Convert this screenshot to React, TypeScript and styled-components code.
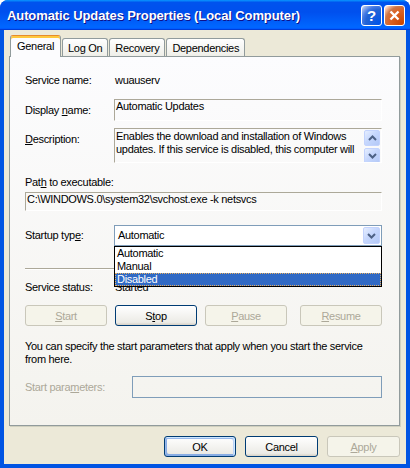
import styled, { createGlobalStyle } from 'styled-components';

const GlobalStyle = createGlobalStyle`
  html, body {
    margin: 0;
    padding: 0;
    background: #ffffff;
  }
  body {
    font-family: "Liberation Sans", Arial, sans-serif;
    font-size: 11px;
    letter-spacing: -0.3px;
    color: #000000;
  }
  * {
    box-sizing: border-box;
  }
`;

const Window = styled.div`
  width: 410px;
  height: 468px;
  display: flex;
  flex-direction: column;
  background: #0054e3;
  border-radius: 8px 8px 0 0;
  overflow: hidden;
`;

const TitleBar = styled.div`
  height: 30px;
  flex: none;
  display: flex;
  align-items: center;
  justify-content: space-between;
  padding: 0 5px 0 7px;
  background: linear-gradient(
    180deg,
    #0997ff,
    #0053ee 8%,
    #0050ee 40%,
    #0066ff 88%,
    #0066ff 93%,
    #005bff 95%,
    #003dd7 96%,
    #003dd7
  );
`;

const Title = styled.div`
  color: #ffffff;
  font-weight: 700;
  font-size: 13px;
  letter-spacing: -0.1px;
  text-shadow: 1px 1px #0f1089;
`;

const TitleButtons = styled.div`
  display: flex;
  gap: 2px;
`;

const CaptionButton = styled.div<{ $kind: 'help' | 'close' }>`
  width: 21px;
  height: 21px;
  border: 1px solid #ffffff;
  border-radius: 3px;
  display: flex;
  align-items: center;
  justify-content: center;
  color: #ffffff;
  font-weight: 700;
  font-size: 15px;
  background: ${(p) =>
    p.$kind === 'close'
      ? 'radial-gradient(circle at 90% 90%, #cc4600 0, #dc6527 55%, #cd7546 70%, #ffccb2 90%, #fff 100%)'
      : 'radial-gradient(circle at 90% 90%, #0054e9 0, #2263d5 55%, #4479e4 70%, #a3bbec 90%, #fff 100%)'};
`;

const Body = styled.div`
  flex: 1;
  min-height: 0;
  margin: 0 4px 4px;
  background: #ece9d8;
  display: flex;
  flex-direction: column;
  padding: 5px 6px 0 5px;
`;

const TabRow = styled.div`
  display: flex;
  align-items: flex-end;
  height: 21px;
  padding-left: 1px;
  gap: 1px;
  flex: none;
`;

const Tab = styled.div<{ $active?: boolean }>`
  position: relative;
  display: flex;
  align-items: center;
  border: 1px solid #919b9c;
  border-bottom: none;
  border-radius: 3px 3px 0 0;
  ${(p) =>
    p.$active
      ? `
    z-index: 1;
    height: 22px;
    margin-bottom: -1px;
    padding: 0 6px 2px;
    background: #fcfcfe;
    border-top-color: #e68b2c;
    box-shadow: inset 0 2px #ffc83c;
  `
      : `
    height: 18px;
    padding: 0 5px;
    background: linear-gradient(180deg, #fff, #fafaf9 26%, #f0f0ea 95%, #ecebe6);
  `}
`;

const Panel = styled.div`
  flex: 1;
  display: flex;
  flex-direction: column;
  border: 1px solid #919b9c;
  background: linear-gradient(180deg, #fcfcfe, #f4f3ee);
  box-shadow: 1px 1px 0 #d0d0bf;
  padding: 0 17px 0 15px;
`;

const FieldRow = styled.div<{ $top: number; $label?: number; $center?: boolean }>`
  display: grid;
  grid-template-columns: ${(p) => p.$label ?? 89}px 1fr;
  align-items: ${(p) => (p.$center ? 'center' : 'start')};
  margin-top: ${(p) => p.$top}px;
  line-height: 13px;
`;

const Label = styled.div<{ $pad?: number; $disabled?: boolean }>`
  padding-top: ${(p) => p.$pad ?? 0}px;
  line-height: 13px;
  color: ${(p) => (p.$disabled ? '#aca899' : '#000000')};
  white-space: nowrap;
`;

const Value = styled.div`
  padding-left: 1px;
  line-height: 13px;
`;

const ReadOnlyBox = styled.div<{ $height: number; $padTop?: number }>`
  position: relative;
  height: ${(p) => p.$height}px;
  border: 1px solid;
  border-color: #aca899 #ffffff #ffffff #aca899;
  padding: ${(p) => p.$padTop ?? 0}px 18px 0 1px;
  line-height: 13px;
  white-space: pre-wrap;
  overflow: hidden;
`;

const Heading = styled.div<{ $top: number }>`
  margin-top: ${(p) => p.$top}px;
  line-height: 13px;
`;

const ScrollColumn = styled.div`
  position: absolute;
  top: 1px;
  right: 1px;
  display: flex;
  flex-direction: column;
  gap: 2px;
`;

const ArrowButton = styled.div<{ $size: number }>`
  width: ${(p) => p.$size}px;
  height: ${(p) => p.$size}px;
  display: flex;
  align-items: center;
  justify-content: center;
  border: 1px solid #c3d3fd;
  border-radius: 2px;
  background: linear-gradient(135deg, #e6eeff 0%, #c6d7fd 45%, #b4c9f7 100%);
`;

const ComboWrap = styled.div`
  position: relative;
`;

const Combo = styled.div`
  height: 21px;
  border: 1px solid #7f9db9;
  background: #ffffff;
  display: flex;
  align-items: center;
  justify-content: space-between;
  padding: 0 1px 0 3px;
`;

const DropList = styled.div`
  position: absolute;
  z-index: 2;
  top: 100%;
  left: 0;
  right: 0;
  border: 1px solid #000000;
  background: #ffffff;
`;

const DropItem = styled.div<{ $selected?: boolean }>`
  height: 13px;
  line-height: 13px;
  padding-left: 2px;
  ${(p) =>
    p.$selected
      ? `
    background: #316ac5;
    color: #ffffff;
    outline: 1px dotted #e8b060;
    outline-offset: -1px;
  `
      : ''}
`;

const Separator = styled.div<{ $top: number }>`
  margin-top: ${(p) => p.$top}px;
  height: 2px;
  border-top: 1px solid #aca899;
  border-bottom: 1px solid #ffffff;
`;

const ButtonRow = styled.div<{ $top: number }>`
  margin-top: ${(p) => p.$top}px;
  display: flex;
  gap: 8px;
  & > :last-child {
    margin-left: auto;
  }
`;

const Button = styled.div<{ $width: number; $disabled?: boolean; $default?: boolean }>`
  width: ${(p) => p.$width}px;
  height: 21px;
  display: flex;
  align-items: center;
  justify-content: center;
  border-radius: 3px;
  border: 1px solid ${(p) => (p.$disabled ? '#c9c7ba' : '#003c74')};
  color: ${(p) => (p.$disabled ? '#aca899' : '#000000')};
  background: ${(p) =>
    p.$disabled ? '#f5f4ea' : 'linear-gradient(180deg, #fff, #ecebe6 86%, #d6d0c5)'};
  box-shadow: ${(p) =>
    p.$default
      ? 'inset -1px 1px #cee7ff, inset 1px 2px #98b8ea, inset -2px 2px #bcd4f6, inset 1px -1px #89ade4, inset 2px -2px #89ade4'
      : 'none'};
`;

const Note = styled.p<{ $top: number }>`
  margin: ${(p) => p.$top}px 0 0;
  line-height: 13px;
`;

const ParamBox = styled.div`
  height: 22px;
  border: 1px solid #7f9db9;
`;

const Footer = styled.div`
  flex: none;
  display: flex;
  justify-content: flex-end;
  gap: 9px;
  padding: 10px 0 7px;
`;

const Chevron = ({ up }: { up?: boolean }) => (
  <svg width="9" height="6" viewBox="0 0 9 6">
    <path
      d={up ? 'M1 5 L4.5 1.5 L8 5' : 'M1 1 L4.5 4.5 L8 1'}
      fill="none"
      stroke="#4d6185"
      strokeWidth="2"
    />
  </svg>
);

export default function App() {
  return (
    <>
      <GlobalStyle />
      <Window>
        <TitleBar>
          <Title>Automatic Updates Properties (Local Computer)</Title>
          <TitleButtons>
            <CaptionButton $kind="help">?</CaptionButton>
            <CaptionButton $kind="close">
              <svg width="11" height="11" viewBox="0 0 11 11">
                <path d="M1.5 1.5 L9.5 9.5 M9.5 1.5 L1.5 9.5" stroke="#fff" strokeWidth="2.4" />
              </svg>
            </CaptionButton>
          </TitleButtons>
        </TitleBar>
        <Body>
          <TabRow>
            <Tab $active>General</Tab>
            <Tab>Log On</Tab>
            <Tab>Recovery</Tab>
            <Tab>Dependencies</Tab>
          </TabRow>
          <Panel>
            <FieldRow $top={17}>
              <Label>Service name:</Label>
              <Value>wuauserv</Value>
            </FieldRow>
            <FieldRow $top={12}>
              <Label $pad={5}>
                Display <u>n</u>ame:
              </Label>
              <ReadOnlyBox $height={22}>Automatic Updates</ReadOnlyBox>
            </FieldRow>
            <FieldRow $top={7}>
              <Label $pad={5}>
                <u>D</u>escription:
              </Label>
              <ReadOnlyBox $height={35} $padTop={1}>
                Enables the download and installation of Windows updates. If this service is
                disabled, this computer will
                <ScrollColumn>
                  <ArrowButton $size={16}>
                    <Chevron up />
                  </ArrowButton>
                  <ArrowButton $size={16}>
                    <Chevron />
                  </ArrowButton>
                </ScrollColumn>
              </ReadOnlyBox>
            </FieldRow>
            <Heading $top={13}>
              Pat<u>h</u> to executable:
            </Heading>
            <ReadOnlyBox $height={19} style={{ marginTop: 3 }}>
              C:\WINDOWS.0\system32\svchost.exe -k netsvcs
            </ReadOnlyBox>
            <FieldRow $top={14} $center>
              <Label>
                Startup typ<u>e</u>:
              </Label>
              <ComboWrap>
                <Combo>
                  Automatic
                  <ArrowButton $size={17}>
                    <Chevron />
                  </ArrowButton>
                </Combo>
                <DropList>
                  <DropItem>Automatic</DropItem>
                  <DropItem>Manual</DropItem>
                  <DropItem $selected>Disabled</DropItem>
                </DropList>
              </ComboWrap>
            </FieldRow>
            <Separator $top={22} />
            <FieldRow $top={11}>
              <Label>Service status:</Label>
              <Value>Started</Value>
            </FieldRow>
            <ButtonRow $top={11}>
              <Button $width={82} $disabled>
                <span>
                  <u>S</u>tart
                </span>
              </Button>
              <Button $width={82}>
                <span>
                  S<u>t</u>op
                </span>
              </Button>
              <Button $width={82} $disabled>
                <span>
                  <u>P</u>ause
                </span>
              </Button>
              <Button $width={82} $disabled>
                <span>
                  <u>R</u>esume
                </span>
              </Button>
            </ButtonRow>
            <Note $top={14}>
              You can specify the start parameters that apply when you start the service from
              here.
            </Note>
            <FieldRow $top={10} $label={107}>
              <Label $pad={5} $disabled>
                Start para<u>m</u>eters:
              </Label>
              <ParamBox />
            </FieldRow>
          </Panel>
          <Footer>
            <Button $width={72} $default>
              OK
            </Button>
            <Button $width={73}>Cancel</Button>
            <Button $width={73} $disabled>
              <span>
                <u>A</u>pply
              </span>
            </Button>
          </Footer>
        </Body>
      </Window>
    </>
  );
}
